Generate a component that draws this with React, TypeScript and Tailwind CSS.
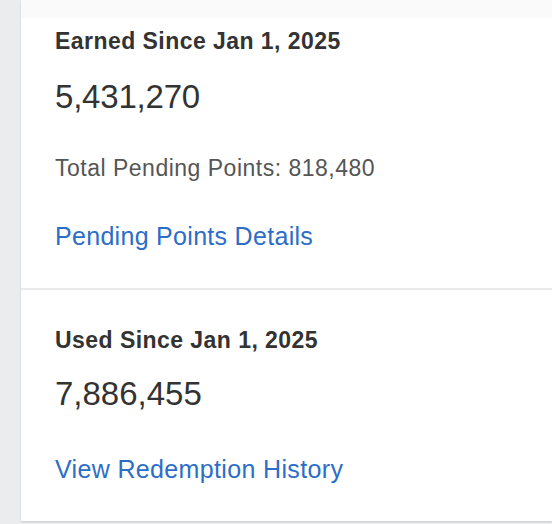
export default function App() {
  return (
    <div
      className="flex h-[524px] w-[552px] overflow-hidden bg-[#ebecee] text-[#333]"
      style={{ fontFamily: '"Liberation Sans", Arial, sans-serif' }}
    >
      <div className="w-[21px] shrink-0 bg-[#ebecee]" />
      <div className="flex h-[521px] flex-1 flex-col bg-white shadow-[0_1px_2px_rgba(0,0,0,0.15)]">
        <div className="h-[18px] bg-[#fafafa]" />
        <section className="flex h-[270px] flex-col px-[34px] pt-[9px]">
          <h2 className="text-[23px] font-bold leading-[28px] tracking-[0.45px]">Earned Since Jan 1, 2025</h2>
          <p className="mt-[22px] text-[33px] leading-[40px] tracking-[-0.2px]">5,431,270</p>
          <p className="mt-[37px] text-[23px] leading-[28px] tracking-[0.5px] text-[#555]">
            Total Pending Points: 818,480
          </p>
          <a href="#" className="mt-[39px] text-[25px] leading-[30px] tracking-[0.3px] text-[#2c6dc8]">
            Pending Points Details
          </a>
        </section>
        <div className="h-[2px] bg-[#e9e9eb]" />
        <section className="flex flex-1 flex-col px-[34px] pt-[36px]">
          <h2 className="text-[23px] font-bold leading-[28px] tracking-[0.45px]">Used Since Jan 1, 2025</h2>
          <p className="mt-[20px] text-[33px] leading-[40px]">7,886,455</p>
          <a href="#" className="mt-[40px] text-[25px] leading-[30px] tracking-[0.35px] text-[#2c6dc8]">
            View Redemption History
          </a>
        </section>
      </div>
    </div>
  );
}
